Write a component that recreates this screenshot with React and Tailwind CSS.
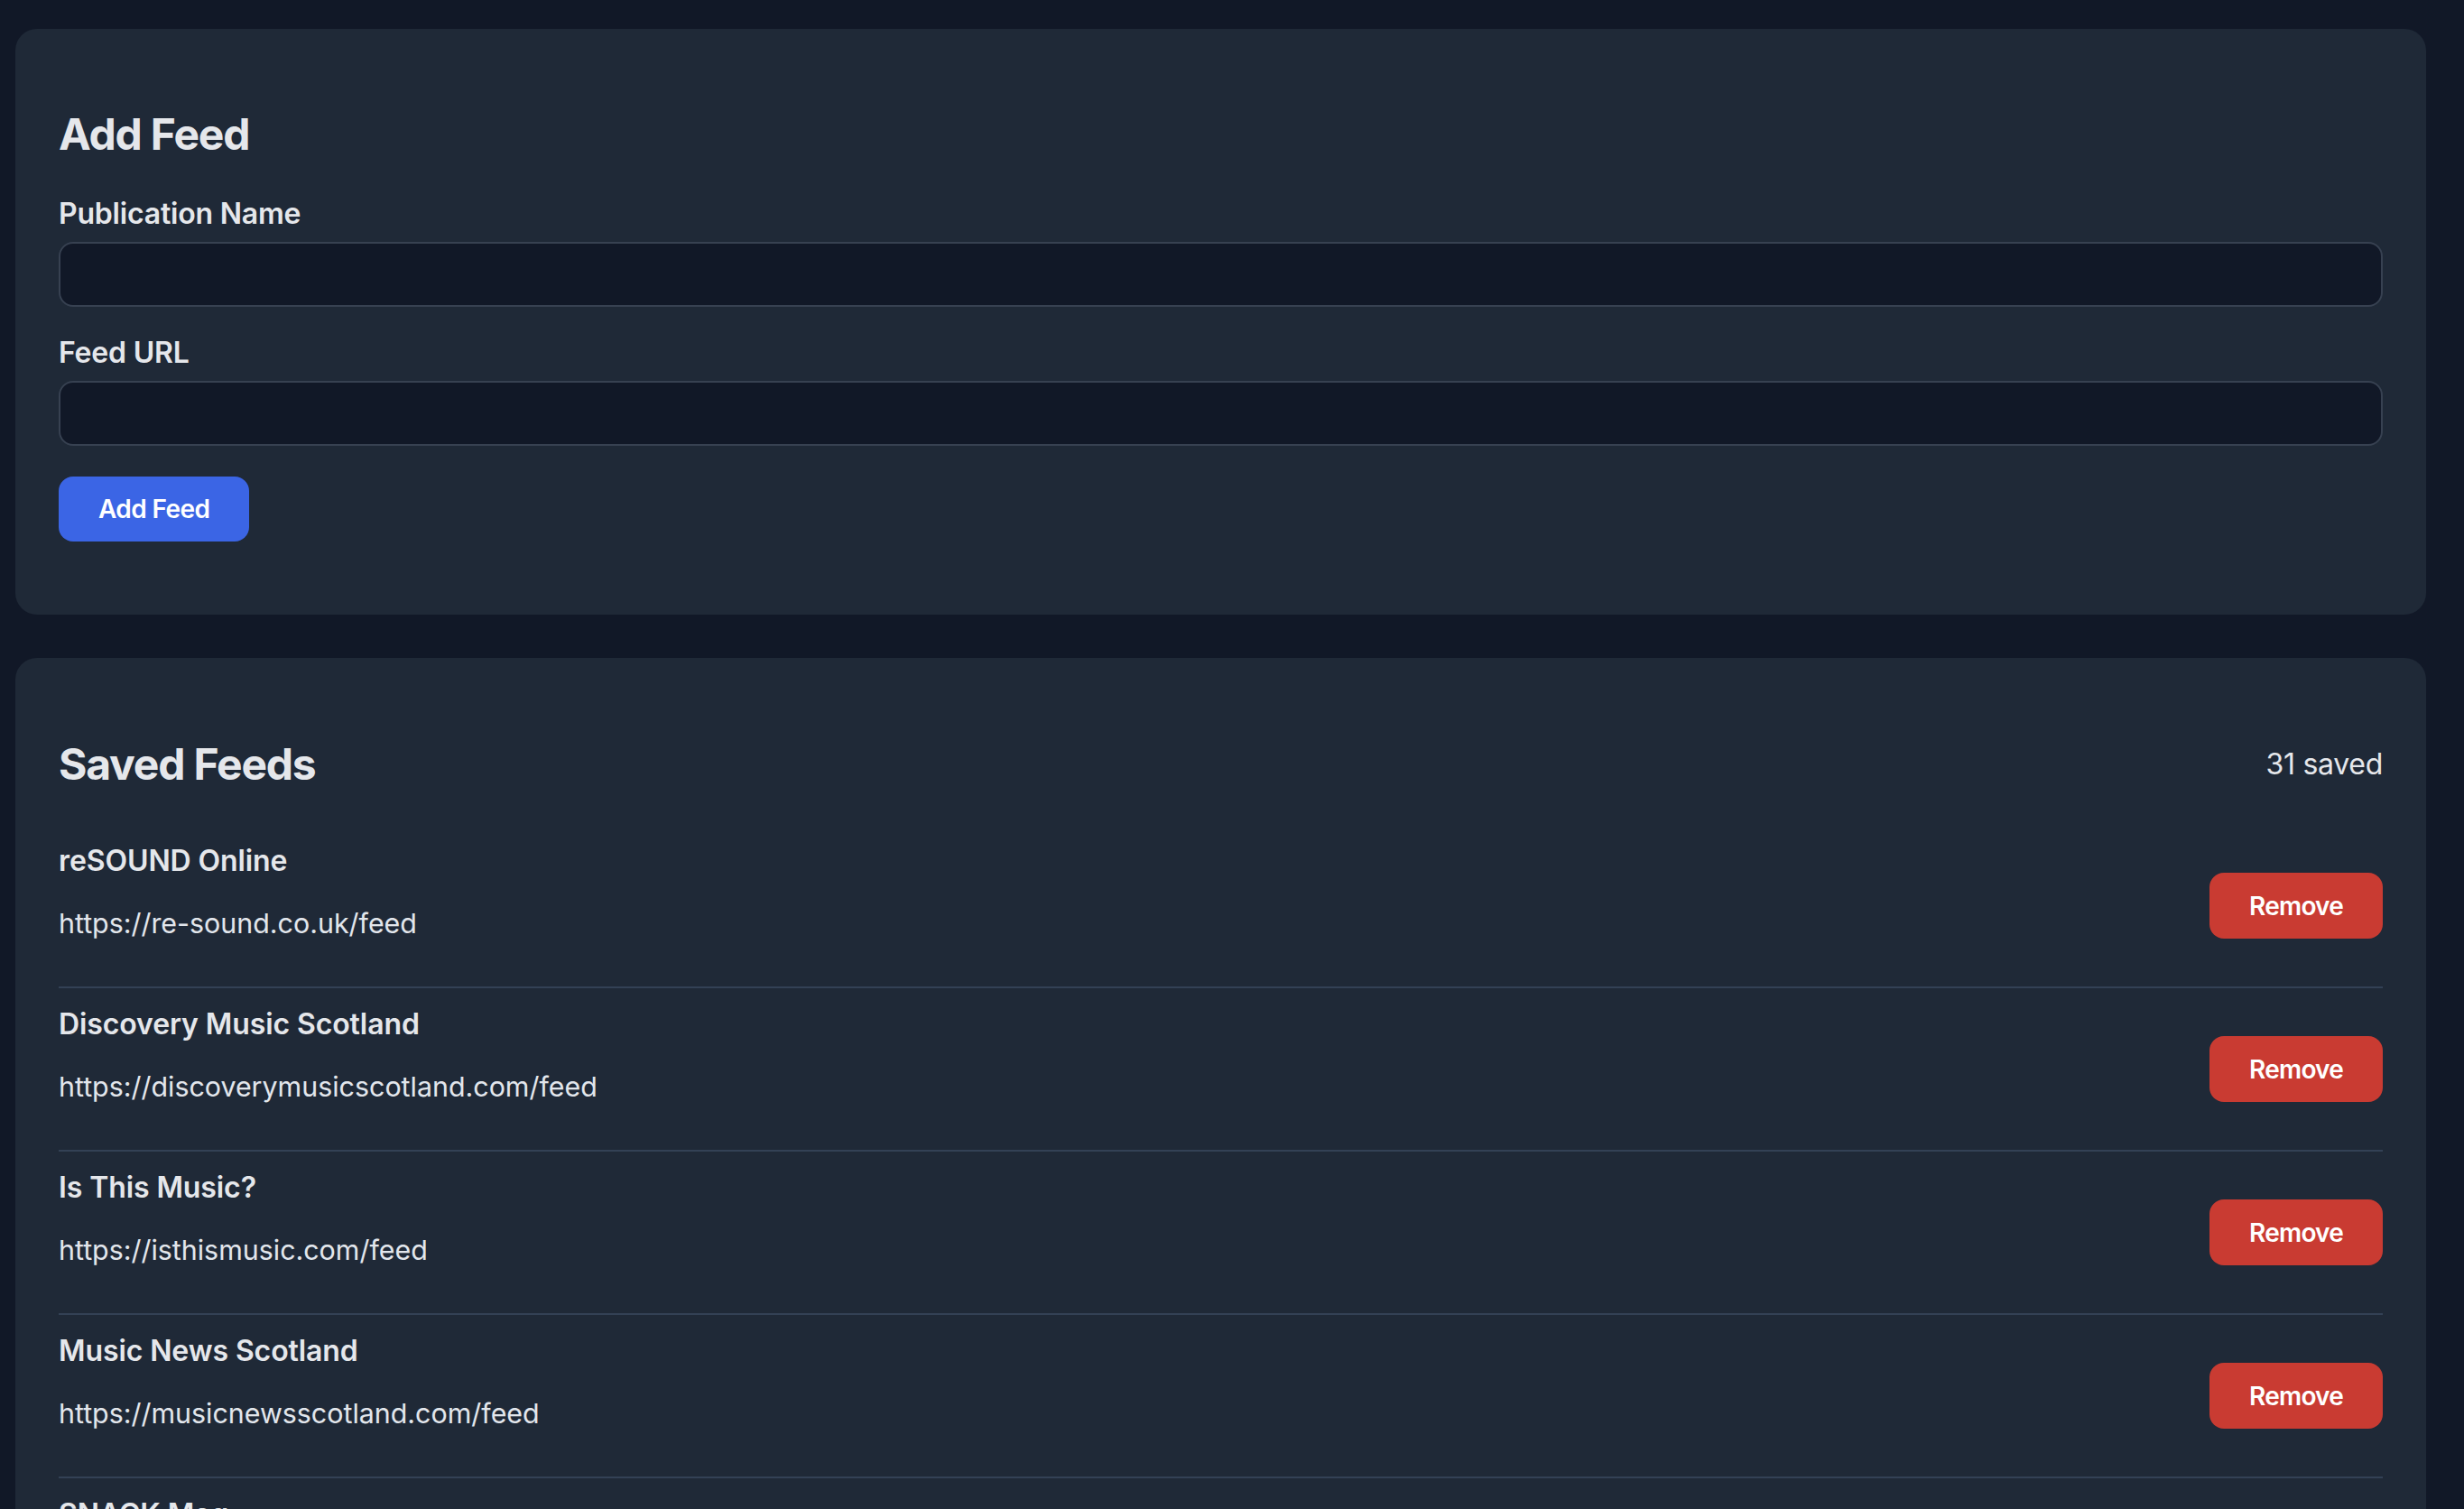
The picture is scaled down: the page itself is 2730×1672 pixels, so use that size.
import React from "react";

const feeds = [
  { name: "reSOUND Online", url: "https://re-sound.co.uk/feed" },
  { name: "Discovery Music Scotland", url: "https://discoverymusicscotland.com/feed" },
  { name: "Is This Music?", url: "https://isthismusic.com/feed" },
  { name: "Music News Scotland", url: "https://musicnewsscotland.com/feed" },
  { name: "SNACK Mag", url: "https://snackmag.co.uk/feed" },
  { name: "The Skinny", url: "https://www.theskinny.co.uk/feed" },
];

const Field = ({ label, first }) => (
  <div className={first ? "mt-[32px]" : "mt-[27px]"}>
    <label className="block text-[32px] leading-[48px] font-semibold tracking-[-0.2px] text-[#e5e7eb]">
      {label}
    </label>
    <input
      type="text"
      className="mt-[7px] block h-[72px] w-full rounded-[16px] border-2 border-[#374151] bg-[#111827] px-[24px] text-[32px] text-[#e5e7eb] outline-none"
    />
  </div>
);

const FeedRow = ({ feed }) => (
  <div className="flex items-center justify-between border-b-2 border-[#334155] py-[16px]">
    <div className="mb-[30px]">
      <div className="text-[32px] leading-[48px] font-semibold tracking-[-0.1px] text-[#e5e7eb]">
        {feed.name}
      </div>
      <div className="mt-[21px] text-[30.4px] leading-[48px] text-[#e2e6ec]">{feed.url}</div>
    </div>
    <button className="h-[73px] rounded-[16px] bg-[#c93b32] px-[44px] text-[28px] font-semibold tracking-[-0.8px] text-white">
      Remove
    </button>
  </div>
);

export default function App() {
  return (
    <div
      className="min-h-screen bg-[#111827] pt-[32px] pl-[17px] pr-[42px] pb-[48px]"
      style={{ fontFamily: "Inter, 'Noto Sans', sans-serif" }}
    >
      <section className="rounded-[24px] bg-[#1f2937] px-[48px] pt-[85px] pb-[81px]">
        <h2 className="text-[48px] leading-[64px] font-bold tracking-[-1.2px] text-[#e5e7eb]">
          Add Feed
        </h2>
        <Field label="Publication Name" first />
        <Field label="Feed URL" />
        <button className="mt-[34px] h-[72px] rounded-[16px] bg-[#3b65e5] px-[44px] text-[28px] font-semibold tracking-[-0.6px] text-white">
          Add Feed
        </button>
      </section>

      <section className="mt-[48px] rounded-[24px] bg-[#1f2937] px-[48px] pt-[86px] pb-[48px]">
        <div className="mb-[35px] flex items-center justify-between">
          <h2 className="text-[48px] leading-[64px] font-bold tracking-[-1.2px] text-[#e5e7eb]">
            Saved Feeds
          </h2>
          <span className="text-[32px] leading-[48px] tracking-[-0.3px] text-[#e5e7eb]">31 saved</span>
        </div>
        <div>
          {feeds.map((feed) => (
            <FeedRow key={feed.url} feed={feed} />
          ))}
        </div>
      </section>
    </div>
  );
}
